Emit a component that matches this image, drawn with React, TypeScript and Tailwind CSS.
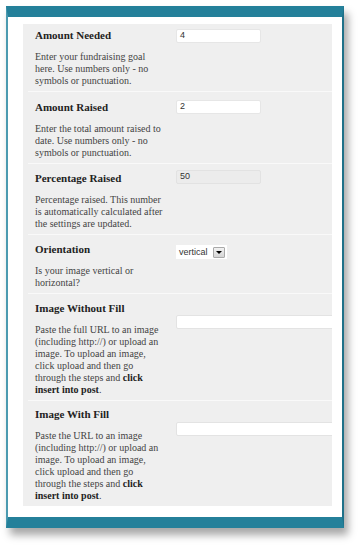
import React from 'react';

type Row = {
  label: string;
  desc: React.ReactNode;
  field: 'text' | 'disabled' | 'select' | 'wide';
  value?: string;
  pt: string;
  mt: string;
};

const rows: Row[] = [
  {
    label: 'Amount Needed',
    desc: 'Enter your fundraising goal here. Use numbers only - no symbols or punctuation.',
    field: 'text',
    value: '4',
    pt: 'pt-[4px]',
    mt: 'mt-[1px]',
  },
  {
    label: 'Amount Raised',
    desc: 'Enter the total amount raised to date. Use numbers only - no symbols or punctuation.',
    field: 'text',
    value: '2',
    pt: 'pt-[8px]',
    mt: 'mt-0',
  },
  {
    label: 'Percentage Raised',
    desc: 'Percentage raised. This number is automatically calculated after the settings are updated.',
    field: 'disabled',
    value: '50',
    pt: 'pt-[7px]',
    mt: 'mt-[-1px]',
  },
  {
    label: 'Orientation',
    desc: 'Is your image vertical or horizontal?',
    field: 'select',
    pt: 'pt-[7px]',
    mt: 'mt-[3px]',
  },
  {
    label: 'Image Without Fill',
    desc: (
      <>
        Paste the full URL to an image (including http://) or upload an image. To upload an image,
        click upload and then go through the steps and <b>click insert into post</b>.
      </>
    ),
    field: 'wide',
    pt: 'pt-[7px]',
    mt: 'mt-[14px]',
  },
  {
    label: 'Image With Fill',
    desc: (
      <>
        Paste the URL to an image (including http://) or upload an image. To upload an image, click
        upload and then go through the steps and <b>click insert into post</b>.
      </>
    ),
    field: 'wide',
    pt: 'pt-[6px]',
    mt: 'mt-[15px]',
  },
];

const Field = ({ row }: { row: Row }) => {
  if (row.field === 'select') {
    return (
      <div className={`${row.mt} flex h-[14px] w-[51px] items-center bg-white pl-[3px] pr-[2px]`}>
        <span className="flex-1 font-['Liberation_Sans',sans-serif] text-[9px] leading-none text-[#333]">
          vertical
        </span>
        <span className="flex h-[11px] w-[12px] items-center justify-center rounded-[1px] border border-[#a9a9a9] bg-gradient-to-b from-[#f2f2f2] to-[#d4d4d4]">
          <span className="h-0 w-0 border-x-[3px] border-t-[3px] border-x-transparent border-t-black" />
        </span>
      </div>
    );
  }
  if (row.field === 'wide') {
    return <div className={`${row.mt} h-[14px] w-[200px] rounded-[2px] border border-[#e3e3e3] bg-white`} />;
  }
  const bg = row.field === 'disabled' ? 'bg-[#ececec] border-[#e2e2e2]' : 'bg-white border-[#e6e6e6]';
  return (
    <div
      className={`${row.mt} ${bg} flex h-[14px] w-[85px] items-center rounded-[2px] border pl-[3px] font-['Liberation_Sans',sans-serif] text-[9px] text-[#333]`}
    >
      {row.value}
    </div>
  );
};

export default function App() {
  return (
    <div className="h-[546px] w-[358px] bg-white pl-[6px] pt-[6px]">
      <div className="w-[338px] border-b-[11px] border-l-2 border-r-2 border-t-[11px] border-b-[#24809a] border-l-[#4b9ab0] border-r-[#1f7189] border-t-[#24809a] bg-white pb-[11px] pl-[15px] pr-[10px] pt-[7px] shadow-[4px_7px_8px_rgba(0,0,0,0.35)]">
        <div className="overflow-hidden bg-[#efefef] font-['Liberation_Serif',serif]">
          {rows.map((row, i) => (
            <div
              key={row.label}
              className={`flex ${row.pt} pb-[4px] ${i < rows.length - 1 ? 'border-b border-[#f9f9f9]' : ''} ml-[5px]`}
            >
              <div className="w-[148px] shrink-0 pl-[7px]">
                <div className="text-[11px] font-bold leading-[14px] text-[#222]">{row.label}</div>
                <div className="mt-[9px] w-[130px] text-[10px] leading-[12px] text-[#444] [&_b]:text-[#222]">
                  {row.desc}
                </div>
              </div>
              <div className="min-w-0 flex-1">
                <Field row={row} />
              </div>
            </div>
          ))}
        </div>
      </div>
    </div>
  );
}
